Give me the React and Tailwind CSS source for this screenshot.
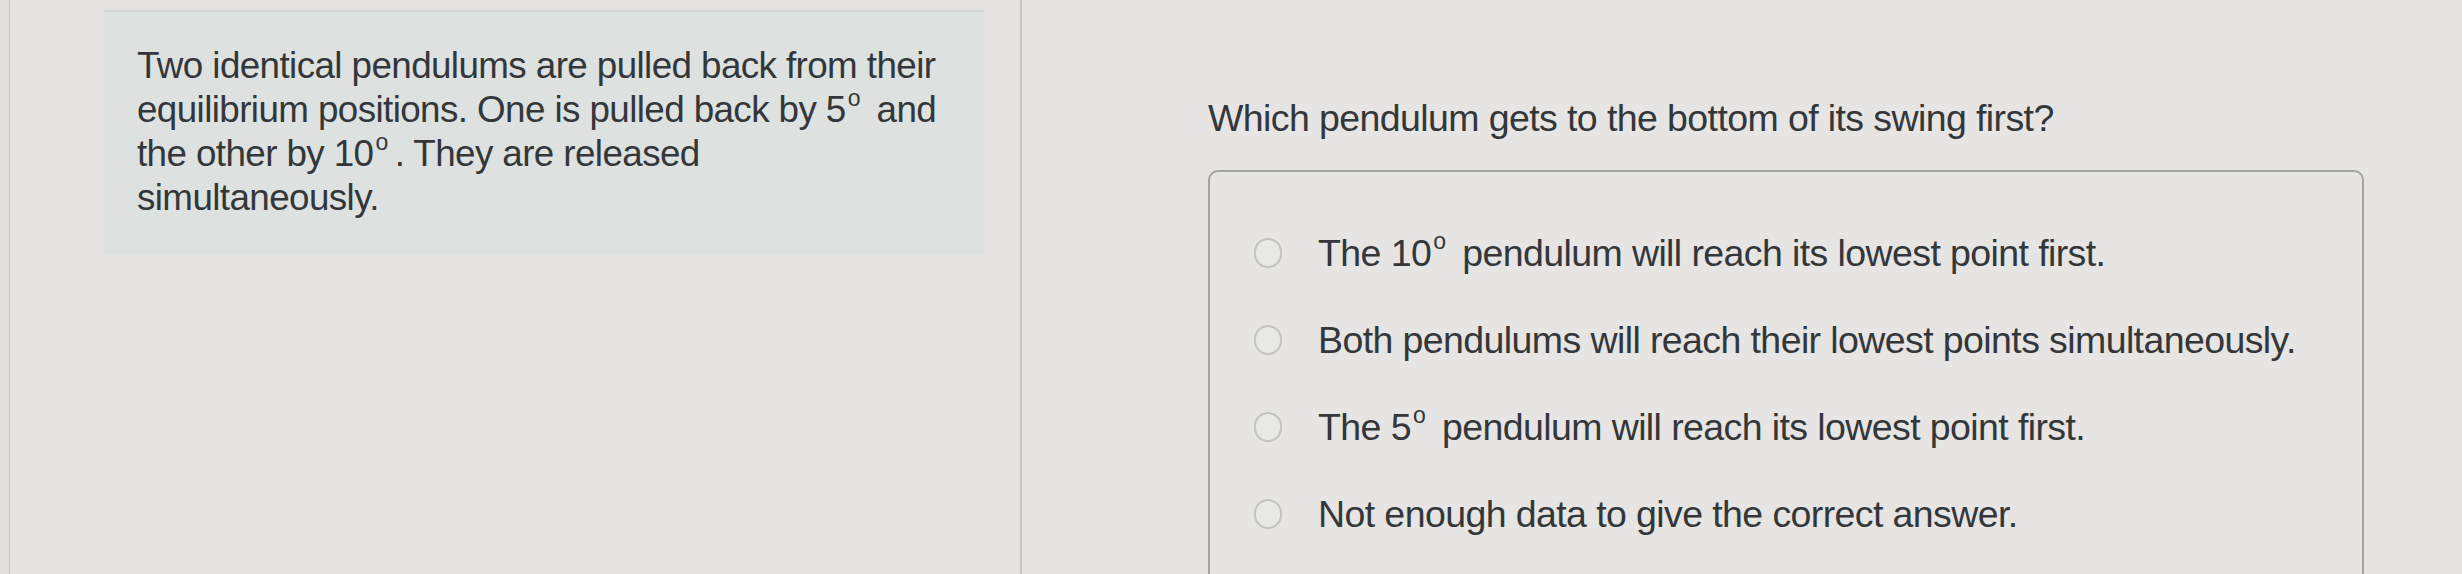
export default function App() {
  const deg = (
    <sup className="text-[23px] relative top-[-3px] ml-[2px] mr-[7px] align-super leading-none">o</sup>
  );

  const options = [
    <>The 10{deg} pendulum will reach its lowest point first.</>,
    <>Both pendulums will reach their lowest points simultaneously.</>,
    <>The 5{deg} pendulum will reach its lowest point first.</>,
    <>Not enough data to give the correct answer.</>,
  ];

  return (
    <div
      className="w-[2462px] h-[574px] overflow-hidden flex bg-[#e5e4e2] text-[#33373a]"
      style={{ fontFamily: '"Liberation Sans", Arial, sans-serif' }}
    >
      <div className="w-[10px] shrink-0 border-r border-[#c9c9c7] bg-[#e1e0de]" />

      {/* left column: question stem */}
      <div className="w-[1012px] shrink-0 pl-[94px] pt-[10px] border-r-2 border-[#c4c6c6]">
        <div className="w-[880px] h-[245px] bg-[#dde2e1] border-t-2 border-[#cfd3d2] pl-[33px] pt-[32px]">
          <p className="text-[36.8px] leading-[44px] tracking-[-0.6px] whitespace-nowrap">
            Two identical pendulums are pulled back from their
            <br />
            equilibrium positions. One is pulled back by 5{deg} and
            <br />
            the other by 10{deg}. They are released
            <br />
            simultaneously.
          </p>
        </div>
      </div>

      {/* right column: question + choices */}
      <div className="flex-1 pl-[186px] pt-[96px] bg-[#e6e5e3]">
        <p className="text-[37.5px] leading-[44px] tracking-[-0.6px]">
          Which pendulum gets to the bottom of its swing first?
        </p>
        <div className="mt-[30px] w-[1156px] h-[420px] border-2 border-[#a3a4a4] rounded-[10px] pt-[37px] pl-[44px]">
          {options.map((o, i) => (
            <div key={i} className="h-[87px] flex items-center gap-[36px]">
              <span className="w-[28px] h-[30px] rounded-full border-2 border-[#c3c3c2] bg-[#e8e8e6] shrink-0" />
              <span className="text-[37.5px] leading-[44px] tracking-[-0.6px] whitespace-nowrap">{o}</span>
            </div>
          ))}
        </div>
      </div>
    </div>
  );
}
